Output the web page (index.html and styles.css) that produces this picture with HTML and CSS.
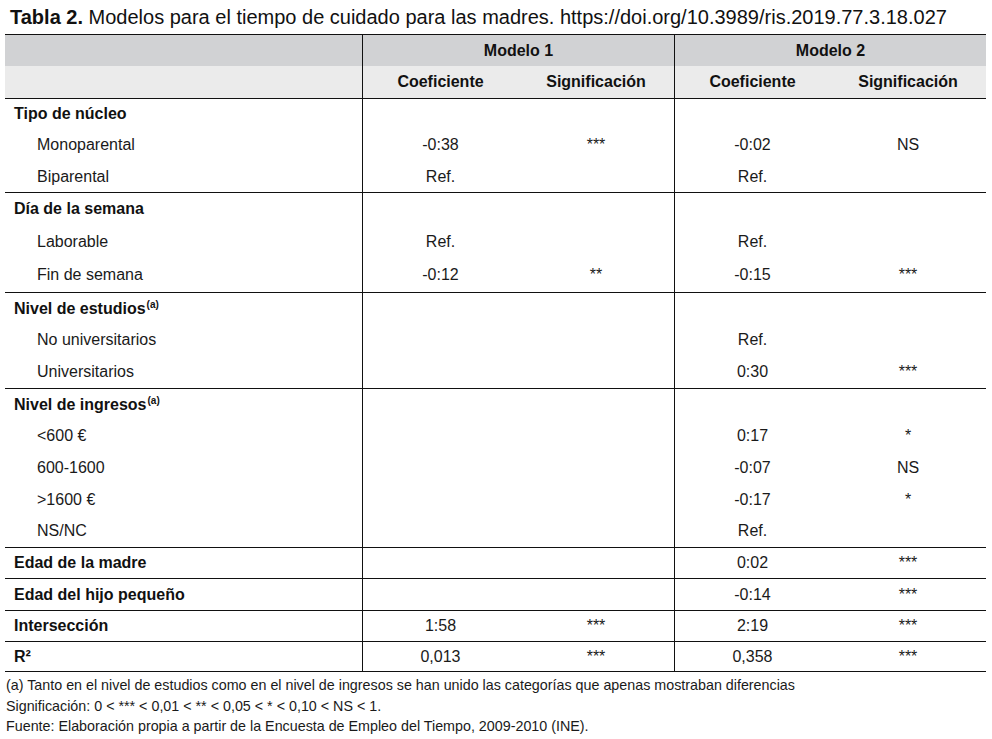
FILE: index.html
```html
<!DOCTYPE html>
<html lang="es">
<head>
<meta charset="utf-8">
<title>Tabla 2</title>
<link rel="stylesheet" href="styles.css">
</head>
<body>
<div class="page">
  <p class="title"><b>Tabla 2.</b> Modelos para el tiempo de cuidado para las madres. https://doi.org/10.3989/ris.2019.77.3.18.027</p>
  <table class="data">
    <colgroup>
      <col class="c-label"><col class="c-val"><col class="c-val"><col class="c-val"><col class="c-val">
    </colgroup>
    <thead>
      <tr class="h1">
        <th></th>
        <th colspan="2" class="vl">Modelo 1</th>
        <th colspan="2" class="vl">Modelo 2</th>
      </tr>
      <tr class="h2">
        <th></th>
        <th class="vl">Coeficiente</th>
        <th>Significación</th>
        <th class="vl">Coeficiente</th>
        <th>Significación</th>
      </tr>
    </thead>
    <tbody>
      <tr class="top r31"><td class="grp">Tipo de núcleo</td><td class="vl"></td><td></td><td class="vl"></td><td></td></tr>
      <tr class="r32"><td class="sub">Monoparental</td><td class="vl">-0:38</td><td>***</td><td class="vl">-0:02</td><td>NS</td></tr>
      <tr class="r31"><td class="sub">Biparental</td><td class="vl">Ref.</td><td></td><td class="vl">Ref.</td><td></td></tr>

      <tr class="top r33"><td class="grp">Día de la semana</td><td class="vl"></td><td></td><td class="vl"></td><td></td></tr>
      <tr class="r33"><td class="sub">Laborable</td><td class="vl">Ref.</td><td></td><td class="vl">Ref.</td><td></td></tr>
      <tr class="r34"><td class="sub">Fin de semana</td><td class="vl">-0:12</td><td>**</td><td class="vl">-0:15</td><td>***</td></tr>

      <tr class="top r32"><td class="grp">Nivel de estudios<sup>(a)</sup></td><td class="vl"></td><td></td><td class="vl"></td><td></td></tr>
      <tr class="r32"><td class="sub">No universitarios</td><td class="vl"></td><td></td><td class="vl">Ref.</td><td></td></tr>
      <tr class="r32"><td class="sub">Universitarios</td><td class="vl"></td><td></td><td class="vl">0:30</td><td>***</td></tr>

      <tr class="top r32"><td class="grp">Nivel de ingresos<sup>(a)</sup></td><td class="vl"></td><td></td><td class="vl"></td><td></td></tr>
      <tr class="r32"><td class="sub">&lt;600 €</td><td class="vl"></td><td></td><td class="vl">0:17</td><td>*</td></tr>
      <tr class="r32"><td class="sub">600-1600</td><td class="vl"></td><td></td><td class="vl">-0:07</td><td>NS</td></tr>
      <tr class="r31"><td class="sub">&gt;1600 €</td><td class="vl"></td><td></td><td class="vl">-0:17</td><td>*</td></tr>
      <tr class="r32"><td class="sub">NS/NC</td><td class="vl"></td><td></td><td class="vl">Ref.</td><td></td></tr>

      <tr class="top r31"><td class="grp">Edad de la madre</td><td class="vl"></td><td></td><td class="vl">0:02</td><td>***</td></tr>
      <tr class="top r32"><td class="grp">Edad del hijo pequeño</td><td class="vl"></td><td></td><td class="vl">-0:14</td><td>***</td></tr>
      <tr class="top r31"><td class="grp">Intersección</td><td class="vl">1:58</td><td>***</td><td class="vl">2:19</td><td>***</td></tr>
      <tr class="top bottom r31"><td class="grp">R²</td><td class="vl">0,013</td><td>***</td><td class="vl">0,358</td><td>***</td></tr>
    </tbody>
  </table>
  <div class="notes">
    <p>(a) Tanto en el nivel de estudios como en el nivel de ingresos se han unido las categorías que apenas mostraban diferencias</p>
    <p>Significación: 0 &lt; *** &lt; 0,01 &lt; ** &lt; 0,05 &lt; * &lt; 0,10 &lt; NS &lt; 1.</p>
    <p>Fuente: Elaboración propia a partir de la Encuesta de Empleo del Tiempo, 2009-2010 (INE).</p>
  </div>
</div>
</body>
</html>
```

FILE: styles.css
```css
html, body {
  margin: 0;
  padding: 0;
  background: #ffffff;
}

.page {
  font-family: "Liberation Sans", Arial, sans-serif;
  color: #1a1a1a;
  width: 992px;
}

.title {
  margin: 0;
  padding: 5px 0 5px 10px;
  font-size: 20px;
  line-height: 24px;
  font-weight: normal;
  color: #111;
}

.title b {
  font-weight: bold;
}

.data {
  margin-left: 5px;
  width: 981px;
  border-collapse: separate;
  border-spacing: 0;
  table-layout: fixed;
  font-size: 16px;
}

.c-label { width: 357px; }
.c-val { width: 156px; }

.data th,
.data td {
  padding: 0;
  text-align: center;
  vertical-align: middle;
  line-height: 18px;
}

.data thead th {
  font-weight: bold;
  color: #111;
}

.h1 th {
  background: #d1d2d4;
  height: 31px;
  border-top: 1px solid #111;
}

.h2 th {
  background: #ebebeb;
  height: 32px;
}

.vl {
  border-left: 1px solid #111;
}

.top td {
  border-top: 1px solid #111;
}

.bottom td {
  border-bottom: 1px solid #111;
}

.r31 { height: 31px; }
.r32 { height: 32px; }
.r33 { height: 33px; }
.r34 { height: 34px; }

.data td.grp {
  text-align: left;
  padding-left: 9px;
  font-weight: bold;
  color: #111;
}

.data td.sub {
  text-align: left;
  padding-left: 32px;
}

.grp sup {
  font-size: 10px;
  line-height: 0;
  vertical-align: 6px;
  margin-left: 1px;
}

.notes {
  padding: 3px 0 0 6px;
  font-size: 14.3px;
  line-height: 20.5px;
  color: #1a1a1a;
}

.notes p {
  margin: 0;
}
```
